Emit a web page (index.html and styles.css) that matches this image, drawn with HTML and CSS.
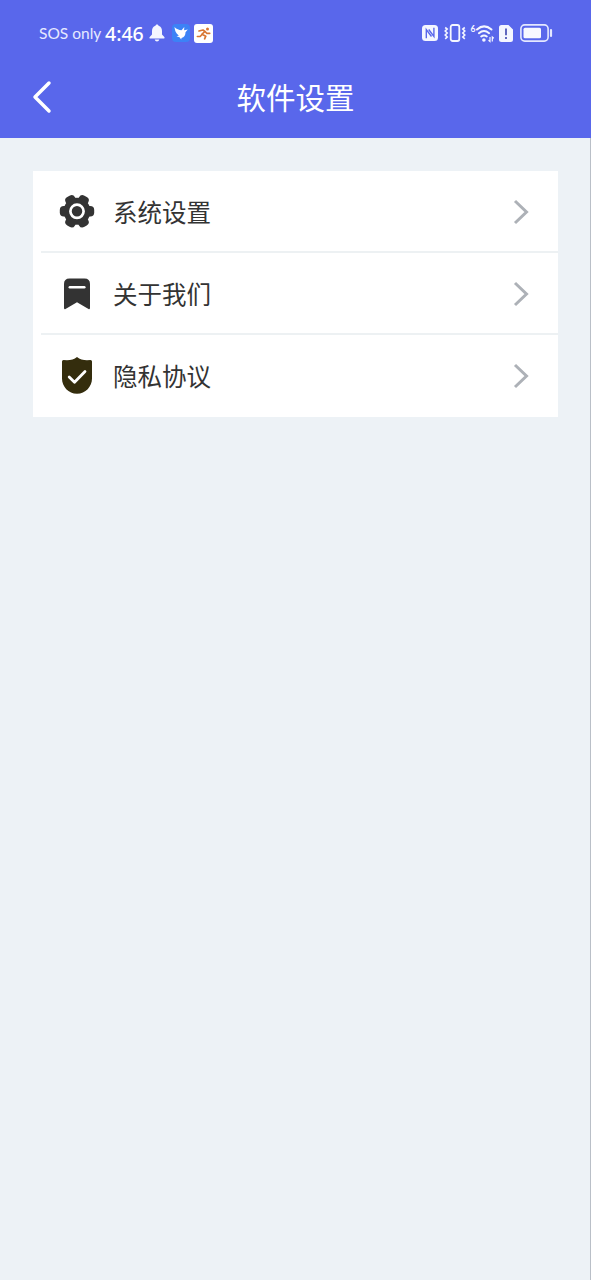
FILE: index.html
```html
<!DOCTYPE html>
<html lang="zh-CN">
<head>
<meta charset="utf-8">
<title>软件设置</title>
<link rel="stylesheet" href="styles.css">
</head>
<body>
<div class="screen">
  <header class="header">
    <div class="status">
      <div class="status-left">
        <span class="carrier">SOS only</span>
        <span class="clock">4:46</span>
        <svg class="bell" width="16" height="18" viewBox="0 0 16 18"><path fill="#f4f6ff" d="M8 .5c.9 0 1.500.6 1.500 1.300C12 2.500 13 4.600 13 7v3.500l2.300 2.400c.6.8.2 1.600-.7 1.600H1.400c-.9 0-1.300-.8-.7-1.600L3 10.500V7c0-2.400 1-4.500 3.500-5.200C6.500 1.100 7.100.5 8 .5zM5.700 15.500h4.600c-.3 1.200-1.200 1.900-2.300 1.900s-2-.7-2.300-1.900z"/></svg>
        <svg class="bird" width="18" height="18" viewBox="0 0 18 18"><rect width="18" height="18" rx="4" fill="#3c82f6"/><path fill="#fff" d="M2.500 3c2 2.200 4.500 3 7 3.200L12.300 3l-.2 3.200 3.700-.7-2.300 2.700c.1 3-1.300 5.200-4 5.800l-.3 1.500-1.700-2.300-3-1 2.500-.8C5 10.500 2.800 7.500 2.500 3z"/></svg>
        <svg class="runner" width="19" height="19" viewBox="0 0 19 19"><rect width="19" height="19" rx="3" fill="#fff"/><circle cx="13.500" cy="5" r="1.500" fill="#d87532"/><path d="M5 7l4-1 2.300 1.700 1.400 1.600 3 .1M10.800 7.700L8 10.200l3.800 2-1.200 2.600M8 10.500l-1.600 1.800-3 .2" fill="none" stroke="#d87532" stroke-width="1.700" stroke-linecap="round" stroke-linejoin="round"/></svg>
      </div>
      <div class="status-right">
        <svg class="nfc" width="16" height="16" viewBox="0 0 16 16"><rect width="16" height="16" rx="3.500" fill="#f4f6ff"/><path d="M4.300 13.300V4.500l5.200 7M11.900 2.700v8.800L6.700 4.500" fill="none" stroke="#5967eb" stroke-width="1.400"/></svg>
        <svg class="vibrate" width="22" height="18" viewBox="0 0 22 18"><rect x="6.700" y="1" width="8.600" height="16" rx="2" fill="none" stroke="#f4f6ff" stroke-width="1.800"/><path d="M1.200 3.500L3.200 5 1.200 7l2 2-2 2 2 2-2 1.800M20.800 3.500l-2 1.500 2 2-2 2 2 2-2 2 2 1.800" fill="none" stroke="#f4f6ff" stroke-width="1.600"/></svg>
        <svg class="wifi" width="25" height="20" viewBox="0 0 25 20"><g fill="none" stroke="#f4f6ff" stroke-width="2" stroke-linecap="round"><path d="M7 6.500q7-6.200 14.500 0M8.900 10.200q5.100-4.300 10.200 0M11.200 13.500q2.800-2.100 5.600 0"/></g><circle cx="13.900" cy="17" r="1.800" fill="#f4f6ff"/><path d="M20 14v4.500l-1.500-1.300M22.300 18.500V14l1.500 1.300" fill="none" stroke="#f4f6ff" stroke-width="1.200"/><text x=".5" y="8.500" class="wifi-gen">6</text></svg>
        <svg class="sim" width="14" height="17" viewBox="0 0 14 17"><path fill="#f4f6ff" d="M2.500 0h7L14 4.500v10a2.500 2.500 0 0 1-2.500 2.500h-9A2.500 2.500 0 0 1 0 14.500v-12A2.500 2.500 0 0 1 2.500 0z"/><path d="M7 3.500v6.800M7 12v2" stroke="#5058b8" stroke-width="1.800"/></svg>
        <svg class="battery" width="33" height="18" viewBox="0 0 33 18"><rect x=".9" y=".9" width="27.200" height="16.200" rx="3.800" fill="none" stroke="#e4e8ff" stroke-width="1.600"/><rect x="3.500" y="3.700" width="17.500" height="10.600" rx="1.500" fill="#f7f8ff"/><path d="M31 6v6" stroke="#e4e8ff" stroke-width="2.200" stroke-linecap="round"/></svg>
      </div>
    </div>
    <div class="nav">
      <svg class="back" width="20" height="34" viewBox="0 0 20 34"><path d="M17 3L3 17l14 14" fill="none" stroke="#fff" stroke-width="3.500" stroke-linecap="round" stroke-linejoin="round"/></svg>
      <h1 class="title">软件设置</h1>
    </div>
  </header>
  <main class="list">
    <div class="row">
      <svg class="icon" width="36" height="40" viewBox="0 0 36 40"><g fill="#333"><circle cx="18" cy="19.300" r="13.500"/><rect x=".8" y="14" width="34.400" height="10.600" rx="4"/><rect x=".8" y="14" width="34.400" height="10.600" rx="4" transform="rotate(60 18 19.300)"/><rect x=".8" y="14" width="34.400" height="10.600" rx="4" transform="rotate(120 18 19.300)"/></g><circle cx="18" cy="19.300" r="6.600" fill="#333" stroke="#fff" stroke-width="2.700"/></svg>
      <span class="label">系统设置</span>
      <svg class="arrow" width="18" height="28" viewBox="0 0 18 28"><path d="M3 3l11.500 11L3 25" fill="none" stroke="#adb1b7" stroke-width="3"/></svg>
    </div>
    <div class="row">
      <svg class="icon" width="36" height="40" viewBox="0 0 36 40"><path d="M5 10q0-5.500 5.500-5.500h15Q31 4.500 31 10v24q0 1.700-1.500.9L18 28.200 6.500 34.900Q5 35.700 5 34z" fill="#333"/><path d="M10.800 13.300h14.500" stroke="#fff" stroke-width="2.500" stroke-linecap="round"/></svg>
      <span class="label">关于我们</span>
      <svg class="arrow" width="18" height="28" viewBox="0 0 18 28"><path d="M3 3l11.500 11L3 25" fill="none" stroke="#adb1b7" stroke-width="3"/></svg>
    </div>
    <div class="row">
      <svg class="icon" width="36" height="40" viewBox="0 0 36 40"><path d="M18 1Q22 4.300 28 4.300l3.500-.3q1.500 0 1.500 1.500V22.500c0 8-6.500 15.300-15 15.300S3 30.500 3 22.500V5.500Q3 4 4.500 4L8 4.300Q14 4.300 18 1z" fill="#342d0d"/><path d="M10.200 21l5.300 5.200L26 15.400" fill="none" stroke="#fff" stroke-width="2.800" stroke-linecap="round" stroke-linejoin="round"/></svg>
      <span class="label">隐私协议</span>
      <svg class="arrow" width="18" height="28" viewBox="0 0 18 28"><path d="M3 3l11.500 11L3 25" fill="none" stroke="#adb1b7" stroke-width="3"/></svg>
    </div>
  </main>
</div>
</body>
</html>
```
FILE: styles.css
```css
* { box-sizing: border-box; }
body {
  margin: 0;
  font-family: "Noto Sans CJK SC", sans-serif;
}
svg { display: block; flex: none; }
.screen {
  height: 1280px;
  background: #edf2f6;
  border-right: 1px solid #b9bfc7;
}
.header {
  height: 138px;
  margin-right: -1px;
  background: #5967eb;
  color: #fff;
}
.status {
  height: 66px;
  padding: 0 38px 0 39px;
  display: flex;
  justify-content: space-between;
  align-items: center;
}
.status-left, .status-right { display: flex; align-items: center; }
.carrier {
  width: 66px;
  font: 15.500px/20px Lato, sans-serif;
  white-space: nowrap;
  color: #e6eaff;
}
.clock {
  width: 44px;
  padding-top: 1px;
  font: 500 19.500px/20px "Noto Sans", sans-serif;
  white-space: nowrap;
}
.bird { margin-left: 7px; }
.runner { margin-left: 4px; }
.nfc { margin-right: 6px; }
.vibrate { margin-right: 4px; }
.wifi { margin-right: 4px; overflow: visible; }
.wifi-gen { font: 700 8.500px Lato, sans-serif; fill: #f4f6ff; }
.sim { margin-right: 7px; }
.nav {
  height: 62px;
  display: grid;
  grid-template-columns: 60px 1fr 60px;
  align-items: center;
}
.back { margin-left: 32px; }
.title {
  margin: 0;
  padding-bottom: 2px;
  text-align: center;
  font-size: 29.500px;
  line-height: 40px;
  font-weight: 400;
}
.list {
  width: 525px;
  margin: 33px 0 0 33px;
  background: #fff;
}
.row {
  height: 82px;
  margin-left: 8px;
  padding: 1px 28px 0 18px;
  display: flex;
  align-items: center;
  border-bottom: 2px solid #edf1f3;
}
.row:last-child { border-bottom-color: transparent; }
.label {
  flex: 1;
  margin-left: 18px;
  font-size: 24.500px;
  line-height: 36px;
  color: #333;
}
```
